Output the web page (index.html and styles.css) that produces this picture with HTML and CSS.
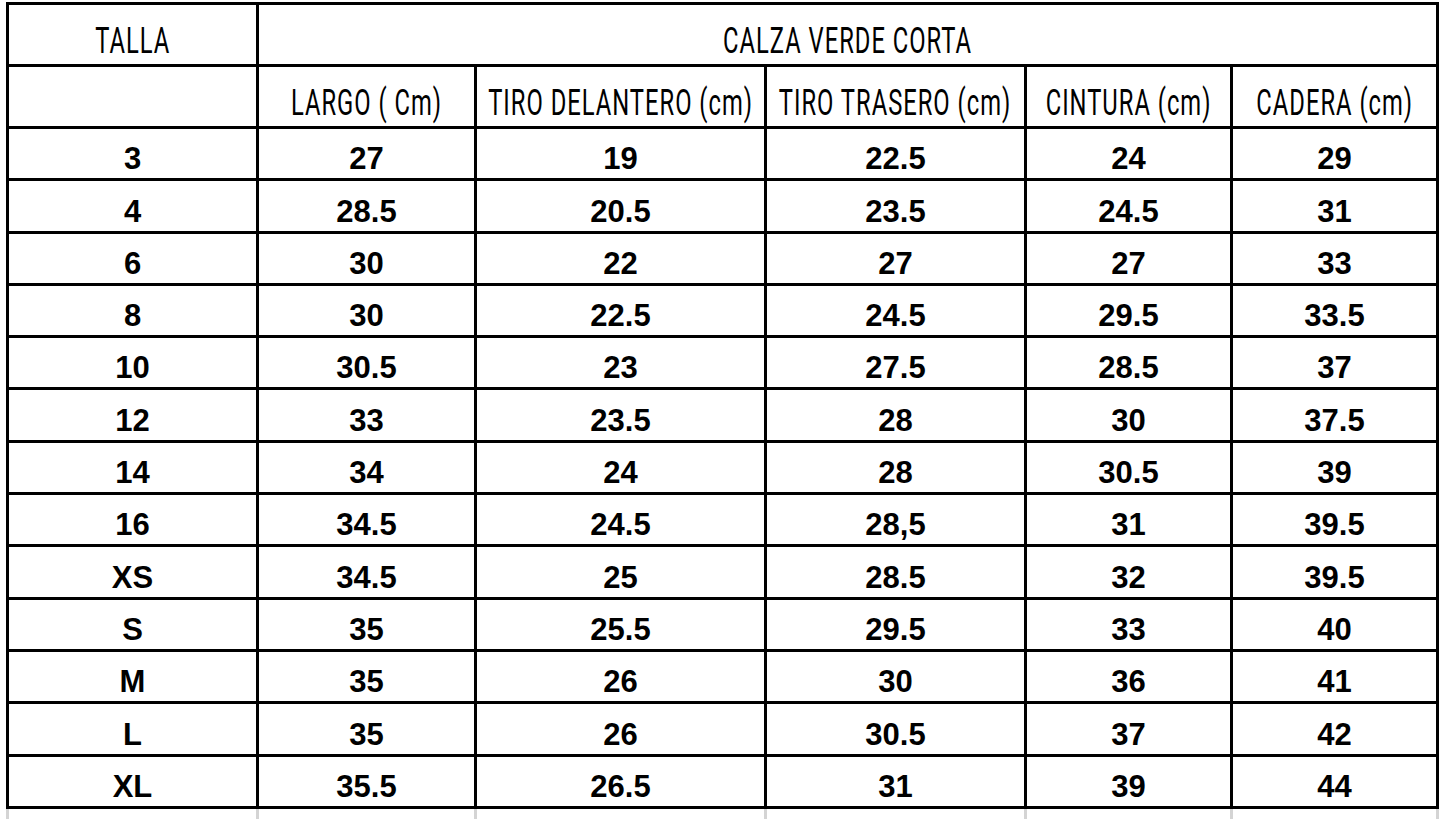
FILE: index.html
```html
<!DOCTYPE html>
<html lang="es">
<head>
<meta charset="utf-8">
<title>Calza verde corta - tallas</title>
<link rel="stylesheet" href="styles.css">
</head>
<body>
<div class="sheet">
  <div class="grid">
    <div class="cell head"><span class="cond">TALLA</span></div>
    <div class="cell head wide"><span class="cond">CALZA VERDE CORTA</span></div>
    <div class="cell head"></div>
    <div class="cell head"><span class="cond">LARGO ( Cm)</span></div>
    <div class="cell head"><span class="cond">TIRO DELANTERO (cm)</span></div>
    <div class="cell head"><span class="cond">TIRO TRASERO (cm)</span></div>
    <div class="cell head"><span class="cond">CINTURA (cm)</span></div>
    <div class="cell head"><span class="cond">CADERA (cm)</span></div>

    <div class="cell">3</div><div class="cell">27</div><div class="cell">19</div><div class="cell">22.5</div><div class="cell">24</div><div class="cell">29</div>
    <div class="cell">4</div><div class="cell">28.5</div><div class="cell">20.5</div><div class="cell">23.5</div><div class="cell">24.5</div><div class="cell">31</div>
    <div class="cell">6</div><div class="cell">30</div><div class="cell">22</div><div class="cell">27</div><div class="cell">27</div><div class="cell">33</div>
    <div class="cell">8</div><div class="cell">30</div><div class="cell">22.5</div><div class="cell">24.5</div><div class="cell">29.5</div><div class="cell">33.5</div>
    <div class="cell">10</div><div class="cell">30.5</div><div class="cell">23</div><div class="cell">27.5</div><div class="cell">28.5</div><div class="cell">37</div>
    <div class="cell">12</div><div class="cell">33</div><div class="cell">23.5</div><div class="cell">28</div><div class="cell">30</div><div class="cell">37.5</div>
    <div class="cell">14</div><div class="cell">34</div><div class="cell">24</div><div class="cell">28</div><div class="cell">30.5</div><div class="cell">39</div>
    <div class="cell">16</div><div class="cell">34.5</div><div class="cell">24.5</div><div class="cell">28,5</div><div class="cell">31</div><div class="cell">39.5</div>
    <div class="cell">XS</div><div class="cell">34.5</div><div class="cell">25</div><div class="cell">28.5</div><div class="cell">32</div><div class="cell">39.5</div>
    <div class="cell">S</div><div class="cell">35</div><div class="cell">25.5</div><div class="cell">29.5</div><div class="cell">33</div><div class="cell">40</div>
    <div class="cell">M</div><div class="cell">35</div><div class="cell">26</div><div class="cell">30</div><div class="cell">36</div><div class="cell">41</div>
    <div class="cell">L</div><div class="cell">35</div><div class="cell">26</div><div class="cell">30.5</div><div class="cell">37</div><div class="cell">42</div>
    <div class="cell">XL</div><div class="cell">35.5</div><div class="cell">26.5</div><div class="cell">31</div><div class="cell">39</div><div class="cell">44</div>
  </div>
  <div class="spill">
    <div></div><div></div><div></div><div></div><div></div><div></div>
  </div>
</div>
</body>
</html>
```

FILE: styles.css
```css
html, body {
  margin: 0;
  padding: 0;
  background: #ffffff;
}

.sheet {
  padding: 2px 0 0 6px;
}

.grid,
.spill {
  display: grid;
  grid-template-columns: 247px 215px 287px 257px 203px 203px;
  column-gap: 3px;
  padding: 0 3px;
  width: max-content;
}

.grid {
  grid-template-rows: 59px 59px repeat(13, 49.3px);
  row-gap: 3px;
  padding: 3px;
  background: #000000;
}

.spill {
  height: 10px;
  background: #d4d4d4;
}

.spill div {
  background: #ffffff;
}

.cell {
  background: #ffffff;
  display: flex;
  align-items: flex-end;
  justify-content: center;
  padding-bottom: 2px;
  box-sizing: border-box;
  font-family: "Liberation Sans", Arial, sans-serif;
  font-weight: 700;
  font-size: 31px;
  line-height: 34px;
  color: #000000;
}

.head {
  font-family: Roboto, "Liberation Sans", sans-serif;
  font-weight: 400;
  font-size: 36px;
  line-height: 42px;
  padding-bottom: 2px;
  white-space: nowrap;
}

.wide {
  grid-column: 2 / span 5;
}

.cond {
  display: inline-block;
  letter-spacing: 1.5px;
  transform: scaleX(0.66);
  transform-origin: center bottom;
}
```
